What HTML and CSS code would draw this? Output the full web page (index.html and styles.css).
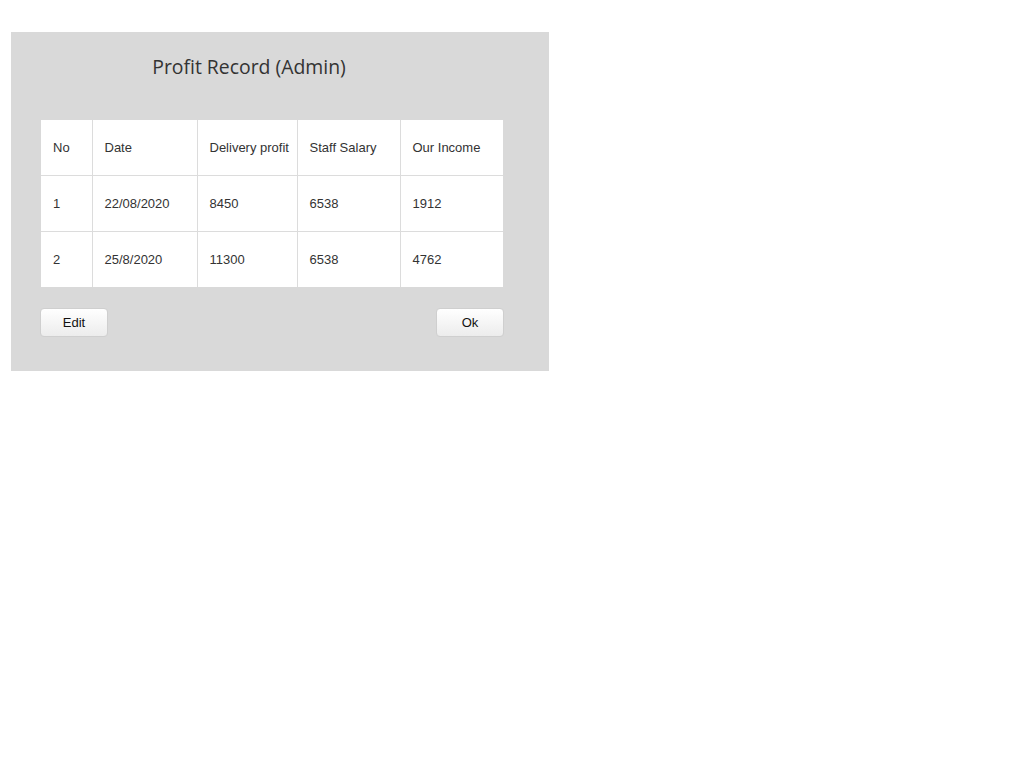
FILE: index.html
```html
<!DOCTYPE html>
<html>
<head>
<meta charset="utf-8">
<link rel="stylesheet" href="styles.css">
</head>
<body>
<div class="panel">
  <h1 class="title">Profit Record (Admin)</h1>
  <table class="records">
    <tr><td class="c1">No</td><td class="c2">Date</td><td class="c3">Delivery profit</td><td class="c4">Staff Salary</td><td class="c5">Our Income</td></tr>
    <tr><td>1</td><td>22/08/2020</td><td>8450</td><td>6538</td><td>1912</td></tr>
    <tr><td>2</td><td>25/8/2020</td><td>11300</td><td>6538</td><td>4762</td></tr>
  </table>
  <div class="actions">
    <button class="btn">Edit</button>
    <button class="btn">Ok</button>
  </div>
</div>
</body>
</html>
```
FILE: styles.css
```css
html, body { margin: 0; padding: 0; background: #fff; }
.panel {
  margin: 32px 0 0 11px;
  width: 538px;
  height: 339px;
  box-sizing: border-box;
  background: #d9d9d9;
  padding: 21px 46px 0 30px;
}
.title {
  margin: 0;
  padding-right: 46px;
  font-family: "Open Sans", sans-serif;
  font-weight: 400;
  font-size: 19.4px;
  line-height: 28px;
  color: #333;
  text-align: center;
}
.records {
  margin-top: 39px;
  border-collapse: collapse;
  background: #fff;
  width: 462px;
  table-layout: fixed;
  font-family: "Liberation Sans", Arial, sans-serif;
  font-size: 13px;
  color: #333;
}
.records td {
  height: 56px;
  padding: 0 0 0 12px;
  border-right: 1px solid #dcdcdc;
  border-bottom: 1px solid #dcdcdc;
  vertical-align: middle;
  box-sizing: border-box;
}
.records tr:first-child td { height: 55px; }
.records tr:last-child td { border-bottom: none; height: 56px; }
.records td:last-child { border-right: none; }
.c1 { width: 51px; }
.c2 { width: 105px; }
.c3 { width: 100px; }
.c4 { width: 103px; }
.c5 { width: 103px; }
.actions {
  margin-top: 21px;
  margin-left: -1px;
  display: flex;
  justify-content: space-between;
  width: 464px;
}
.btn {
  width: 68px;
  height: 29px;
  padding: 0;
  border: 1px solid #cfcfcf;
  border-radius: 4px;
  background: linear-gradient(#ffffff, #ececec);
  font-family: "Liberation Sans", Arial, sans-serif;
  font-size: 13px;
  color: #111;
}
```
